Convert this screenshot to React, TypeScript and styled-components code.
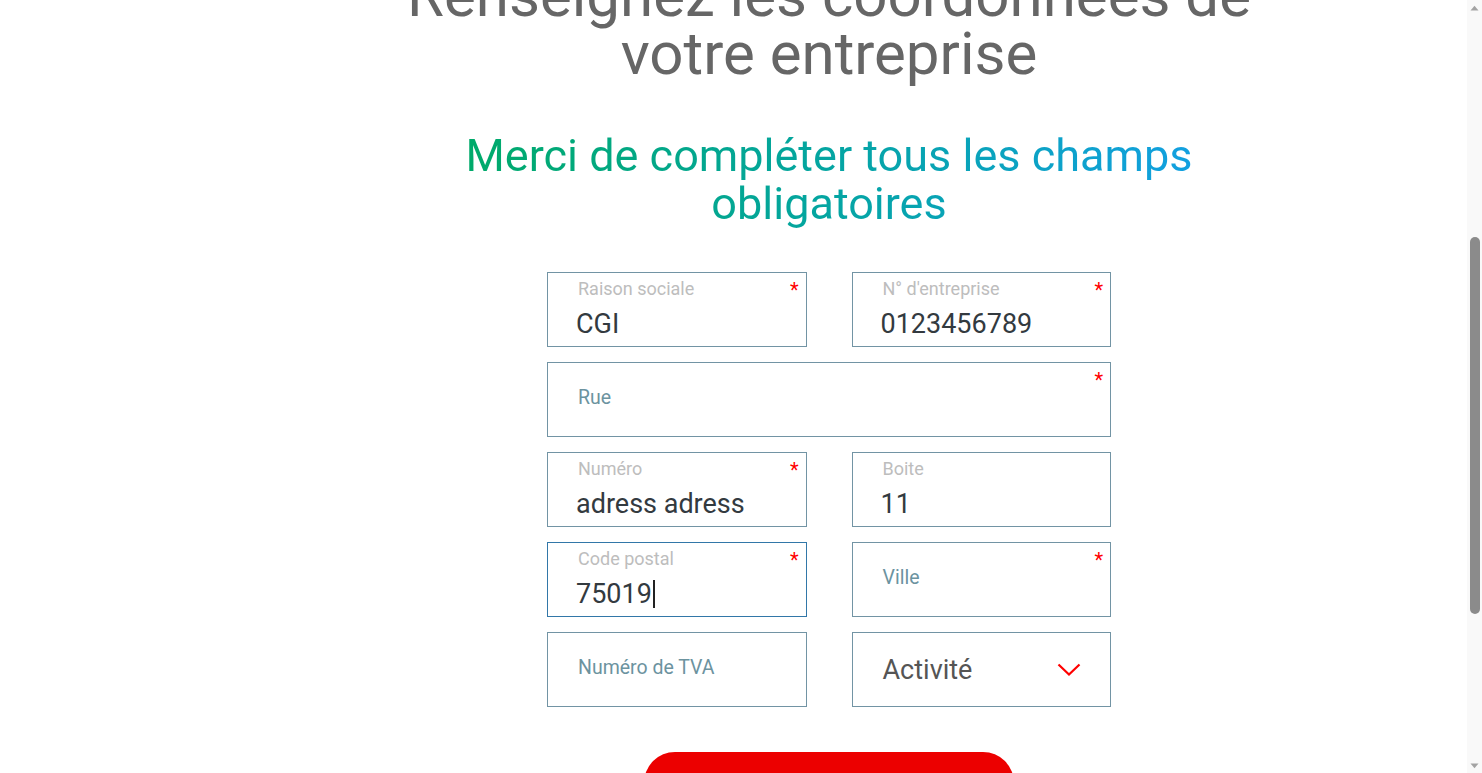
import React, { useLayoutEffect, useEffect, useRef } from "react";
import styled, { createGlobalStyle } from "styled-components";

const GlobalStyle = createGlobalStyle`
  html, body {
    margin: 0;
    padding: 0;
    height: 100%;
    overflow: hidden;
    background: #ffffff;
    font-family: Roboto, "Liberation Sans", Arial, sans-serif;
  }
`;

const Frame = styled.div`
  display: grid;
  grid-template-columns: 1fr 15px;
  height: 100vh;
`;

const Scroller = styled.div`
  overflow-y: auto;
  scrollbar-width: none;
  &::-webkit-scrollbar {
    display: none;
  }
`;

const ScrollRail = styled.div`
  display: flex;
  flex-direction: column;
  background: #f9f9f9;
`;

const ArrowButton = styled.div`
  height: 15px;
  display: flex;
  align-items: center;
  justify-content: center;
`;

const Track = styled.div<{ $offset: number }>`
  flex: 1;
  display: flex;
  flex-direction: column;
  align-items: center;
  padding-top: ${(p) => p.$offset}px;
`;

const Thumb = styled.div<{ $size: number }>`
  width: 10px;
  height: ${(p) => p.$size}px;
  border-radius: 5px;
  background: #8b8b8b;
`;

const Page = styled.div`
  display: grid;
  grid-template-columns: 191px 1fr;
  min-height: 1523px;
`;

const Sidebar = styled.aside`
  display: block;
`;

const Main = styled.main`
  display: flex;
  flex-direction: column;
  align-items: center;
  padding-top: 422px;
`;

const Title = styled.h1`
  margin: 0;
  width: 880px;
  font-size: 60px;
  line-height: 58px;
  font-weight: 400;
  color: #666666;
  text-align: center;
`;

const Subtitle = styled.h2`
  margin: 49px 0 0;
  width: 880px;
  font-size: 45px;
  line-height: 48px;
  font-weight: 400;
  text-align: center;
  background: linear-gradient(90deg, #00aa6a 9%, #04a5a2 50%, #12a0e0 91%);
  -webkit-background-clip: text;
  background-clip: text;
  color: transparent;
`;

const Form = styled.form`
  margin-top: 44px;
  width: 564px;
  display: grid;
  grid-template-columns: 1fr 1fr;
  column-gap: 45px;
  row-gap: 15px;
`;

const Field = styled.div<{ $focused?: boolean; $wide?: boolean; $filled?: boolean }>`
  position: relative;
  grid-column: ${(p) => (p.$wide ? "1 / -1" : "auto")};
  height: 75px;
  box-sizing: border-box;
  border: 1px solid ${(p) => (p.$focused ? "#3277a8" : "#7294a4")};
  padding: ${(p) => (p.$filled ? "6px 28px 0" : "0 28px 4px")};
  display: flex;
  flex-direction: column;
  justify-content: ${(p) => (p.$filled ? "flex-start" : "center")};
`;

const Label = styled.span<{ $filled?: boolean }>`
  font-size: ${(p) => (p.$filled ? "18px" : "19.5px")};
  line-height: 20px;
  padding-left: 2px;
  color: ${(p) => (p.$filled ? "#bdbdbd" : "#6c939f")};
`;

const Value = styled.span`
  margin-top: 10px;
  font-size: 27px;
  line-height: 30px;
  color: #333a3f;
  display: flex;
  align-items: center;
`;

const Caret = styled.span`
  display: inline-block;
  width: 2px;
  height: 28px;
  background: #222;
  margin-left: 1px;
`;

const Required = styled.span`
  position: absolute;
  top: 7px;
  right: 7px;
  font-size: 20px;
  line-height: 20px;
  color: #ff0000;
`;

const Select = styled.div`
  height: 75px;
  box-sizing: border-box;
  border: 1px solid #7294a4;
  padding: 0 29px 0 30px;
  display: flex;
  align-items: center;
  justify-content: space-between;
  font-size: 27px;
  line-height: 30px;
  color: #555555;
  cursor: pointer;
`;

const Button = styled.button`
  margin-top: 45px;
  width: 370px;
  height: 62px;
  border: none;
  border-radius: 31px;
  background: #ec0000;
  color: #ffffff;
  font-family: inherit;
  font-size: 20px;
  cursor: pointer;
`;

type FieldProps = {
  label: string;
  value?: string;
  required?: boolean;
  wide?: boolean;
  focused?: boolean;
};

function TextField({ label, value, required, wide, focused }: FieldProps) {
  const filled = value !== undefined;
  return (
    <Field $filled={filled} $wide={wide} $focused={focused}>
      <Label $filled={filled}>{label}</Label>
      {filled && (
        <Value>
          {value}
          {focused && <Caret />}
        </Value>
      )}
      {required && <Required>*</Required>}
    </Field>
  );
}

const Chevron = () => (
  <svg width="24" height="14" viewBox="0 0 24 14" fill="none">
    <polyline points="1.5,1.5 12,11.5 22.5,1.5" stroke="#ff0000" strokeWidth="2.2" />
  </svg>
);

const ArrowUp = () => (
  <svg width="9" height="6" viewBox="0 0 9 6">
    <polygon points="0.5,5.5 4.5,0.8 8.5,5.5" fill="#a3a3a3" />
  </svg>
);

const ArrowDown = () => (
  <svg width="9" height="6" viewBox="0 0 9 6">
    <polygon points="0.5,0.5 4.5,5.2 8.5,0.5" fill="#a3a3a3" />
  </svg>
);

const SCROLL_TOP = 455;

export default function App() {
  const scrollerRef = useRef<HTMLDivElement>(null);

  useLayoutEffect(() => {
    if (scrollerRef.current) scrollerRef.current.scrollTop = SCROLL_TOP;
  }, []);
  useEffect(() => {
    if (scrollerRef.current) scrollerRef.current.scrollTop = SCROLL_TOP;
  }, []);

  return (
    <>
      <GlobalStyle />
      <Frame>
        <Scroller ref={scrollerRef}>
          <Page>
            <Sidebar />
            <Main>
              <Title>Renseignez les coordonnées de votre entreprise</Title>
              <Subtitle>Merci de compléter tous les champs obligatoires</Subtitle>
              <Form onSubmit={(e) => e.preventDefault()}>
                <TextField label="Raison sociale" value="CGI" required />
                <TextField label="N° d'entreprise" value="0123456789" required />
                <TextField label="Rue" required wide />
                <TextField label="Numéro" value="adress adress" required />
                <TextField label="Boite" value="11" />
                <TextField label="Code postal" value="75019" required focused />
                <TextField label="Ville" required />
                <TextField label="Numéro de TVA" />
                <Select>
                  <span>Activité</span>
                  <Chevron />
                </Select>
              </Form>
              <Button type="button">Continuer</Button>
            </Main>
          </Page>
        </Scroller>
        <ScrollRail>
          <ArrowButton>
            <ArrowUp />
          </ArrowButton>
          <Track $offset={222}>
            <Thumb $size={377} />
          </Track>
          <ArrowButton>
            <ArrowDown />
          </ArrowButton>
        </ScrollRail>
      </Frame>
    </>
  );
}
